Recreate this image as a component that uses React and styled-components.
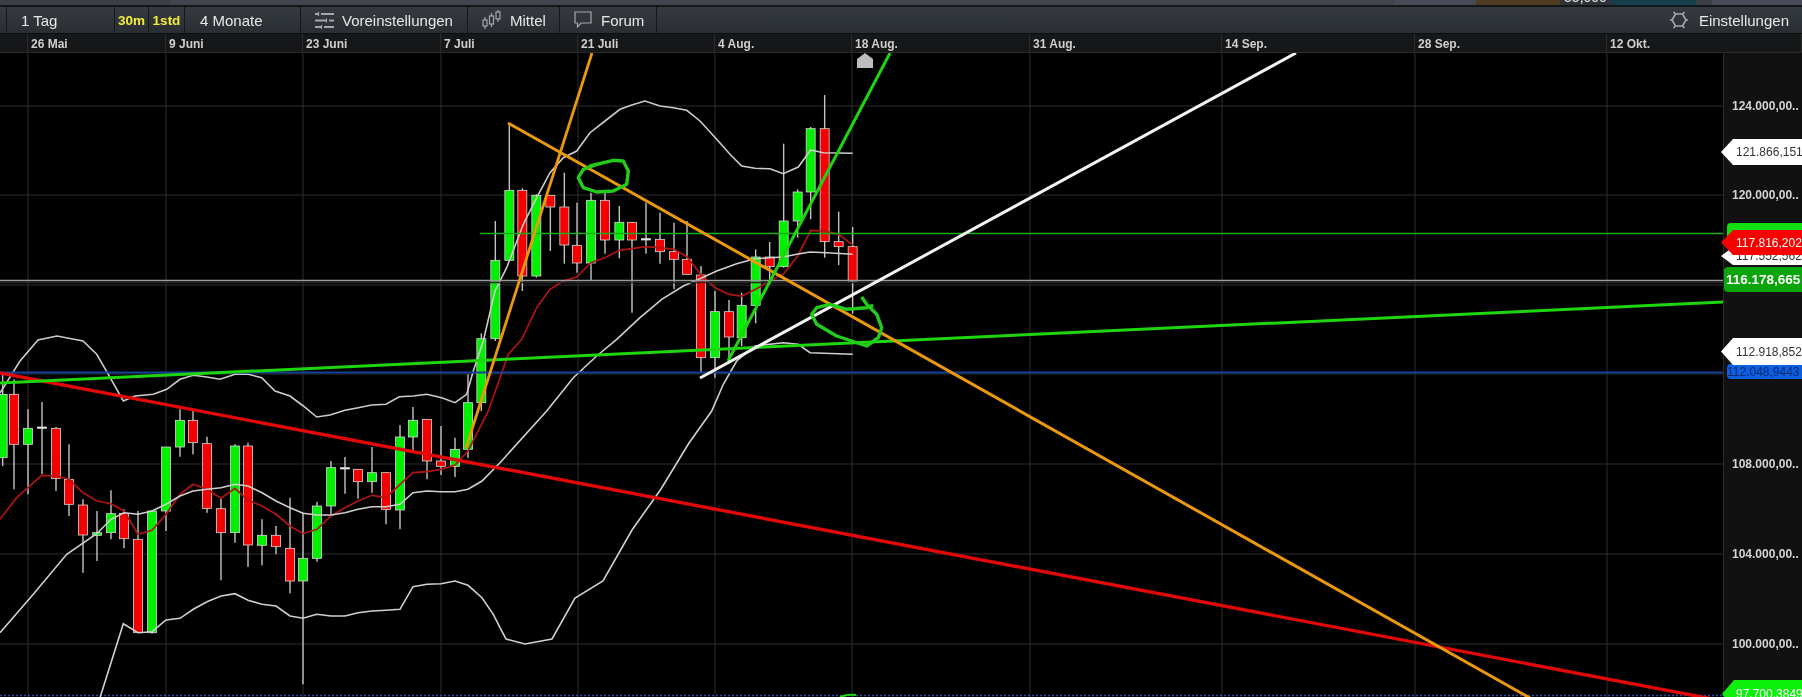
import React from "react";
import styled, { createGlobalStyle } from "styled-components";

// values read from the crops: left crop starts at (0,340), right crop at (440,90), both 3x
const leftCrop = (pts) => pts.map(([x, y]) => [x / 3, 340 + y / 3]);
const rightCrop = (pts) => pts.map(([x, y]) => [440 + x / 3, 90 + y / 3]);
const toPoints = (pts) => pts.map(([x, y]) => `${x.toFixed(1)},${y.toFixed(1)}`).join(" ");

const leftCandles = [
  [8, 160, 350, 100, 375, "g"],
  [42, 160, 310, 115, 445, "r"],
  [84, 262, 310, 205, 460, "g"],
  [126, 258, 262, 183, 400, "w"],
  [168, 262, 412, 258, 450, "r"],
  [207, 415, 490, 310, 525, "r"],
  [249, 492, 582, 475, 695, "r"],
  [291, 575, 583, 510, 660, "g"],
  [333, 518, 575, 448, 595, "g"],
  [372, 517, 593, 505, 622, "r"],
  [414, 595, 875, 510, 875, "r"],
  [456, 510, 875, 507, 878, "g"],
  [498, 318, 510, 318, 570, "g"],
  [540, 238, 318, 205, 347, "g"],
  [579, 238, 305, 210, 340, "r"],
  [621, 308, 502, 287, 515, "r"],
  [663, 503, 575, 472, 718, "r"],
  [705, 315, 575, 310, 605, "g"],
  [744, 315, 612, 305, 677, "r"],
  [786, 583, 613, 535, 673, "g"],
  [828, 583, 617, 555, 640, "r"],
  [870, 622, 720, 470, 757, "r"],
  [909, 652, 720, 515, 1030, "g"],
  [951, 495, 652, 482, 662, "g"],
  [993, 380, 495, 360, 520, "g"],
  [1035, 380, 384, 348, 458, "w"],
  [1074, 385, 422, 385, 473, "r"],
  [1116, 395, 422, 318, 455, "g"],
  [1158, 395, 505, 395, 550, "r"],
  [1200, 288, 507, 253, 565, "g"],
  [1239, 238, 288, 198, 330, "g"],
  [1281, 235, 360, 235, 415, "r"],
  [1323, 360, 376, 255, 402, "r"],
  [1365, 325, 376, 290, 408, "g"],
  [1404, 185, 325, 100, 350, "g"],
];

const rightCandles = [
  [124, 743, 935, 727, 960, "g"],
  [166, 508, 743, 390, 750, "g"],
  [208, 298, 508, 98, 510, "g"],
  [247, 298, 555, 292, 600, "r"],
  [289, 313, 555, 310, 560, "g"],
  [331, 313, 348, 313, 480, "r"],
  [373, 348, 462, 245, 518, "r"],
  [411, 463, 516, 335, 545, "r"],
  [453, 328, 516, 305, 570, "g"],
  [495, 328, 447, 305, 488, "r"],
  [538, 394, 447, 345, 502, "g"],
  [576, 394, 447, 394, 665, "r"],
  [618, 443, 447, 335, 488, "w"],
  [660, 445, 482, 365, 518, "r"],
  [702, 482, 505, 395, 595, "r"],
  [741, 505, 550, 390, 550, "r"],
  [783, 552, 800, 525, 845, "r"],
  [825, 662, 800, 600, 860, "g"],
  [867, 662, 738, 627, 810, "r"],
  [905, 643, 740, 605, 765, "g"],
  [947, 498, 643, 475, 697, "g"],
  [989, 498, 527, 453, 580, "r"],
  [1031, 390, 527, 158, 530, "g"],
  [1073, 303, 390, 295, 440, "g"],
  [1112, 113, 303, 108, 385, "g"],
  [1154, 113, 452, 12, 500, "r"],
  [1196, 452, 467, 362, 522, "r"],
  [1238, 467, 570, 408, 668, "r"],
];

const candles = [
  ...leftCandles.map(([x, t, b, wt, wb, c]) => ({
    x: x / 3, top: 340 + t / 3, bottom: 340 + b / 3, wickTop: 340 + wt / 3, wickBottom: 340 + wb / 3, c,
  })),
  ...rightCandles.map(([x, t, b, wt, wb, c]) => ({
    x: 440 + x / 3, top: 90 + t / 3, bottom: 90 + b / 3, wickTop: 90 + wt / 3, wickBottom: 90 + wb / 3, c,
  })),
];

const bodyColor = { g: "#00f000", r: "#f40000", w: "#e8e8e8" };

const upperBand = [
  [0, 392], [20, 360], [38, 339], [57, 335], [83, 340],
  ...leftCrop([
    [290, 40], [325, 100], [370, 180], [405, 165], [460, 160], [500, 145], [540, 115], [580, 103],
    [620, 108], [660, 115], [705, 100], [745, 100], [785, 110], [825, 150], [870, 165], [910, 195],
    [950, 228], [990, 222], [1035, 208], [1075, 200], [1115, 192], [1158, 190], [1198, 167], [1240, 165],
    [1280, 160], [1325, 170], [1365, 185],
  ]),
  ...rightCrop([
    [80, 910], [100, 840], [130, 750], [165, 600], [200, 530], [250, 400], [290, 320], [330, 245],
    [370, 200], [410, 180], [450, 125], [495, 90], [540, 55], [575, 42], [615, 30], [660, 45],
    [700, 50], [740, 58], [780, 90], [830, 145], [870, 190], [905, 225], [945, 232], [990, 233],
    [1030, 248], [1075, 228], [1112, 177], [1150, 185], [1238, 187],
  ]),
];

const middleBand = [
  ...leftCrop([
    [0, 875], [100, 760], [200, 640], [290, 578], [333, 535], [372, 515], [414, 520], [456, 510],
    [498, 490], [540, 465], [579, 450], [621, 445], [663, 440], [705, 430], [744, 435], [786, 455],
    [828, 480], [870, 500], [909, 517], [951, 522], [993, 522], [1035, 515], [1074, 505], [1116, 497],
    [1158, 497], [1200, 490], [1239, 455], [1281, 450], [1323, 452], [1365, 452], [1404, 445],
    [1446, 420], [1500, 365],
  ]),
  ...rightCrop([
    [320, 960], [400, 860], [470, 795], [530, 745], [600, 680], [665, 625], [730, 585], [783, 562],
    [830, 540], [890, 518], [945, 503], [990, 500], [1030, 498], [1070, 490], [1110, 483], [1160, 485],
    [1238, 490],
  ]),
];

const lowerBand = [
  ...leftCrop([
    [300, 1070], [370, 848], [414, 875], [456, 872], [498, 837], [540, 832], [580, 805], [621, 782],
    [663, 765], [705, 758], [744, 778], [786, 790], [828, 795], [870, 825], [909, 832], [950, 820],
    [993, 825], [1035, 825], [1074, 815], [1116, 810], [1158, 808], [1200, 805], [1239, 737], [1281, 730],
    [1323, 728], [1365, 720], [1404, 733], [1446, 770], [1480, 820], [1500, 860],
  ]),
  [506, 638], [525, 643], [552, 638], [575, 597], [603, 580], [632, 529], [661, 488], [689, 442],
  ...rightCrop([
    [815, 960], [850, 880], [890, 810], [945, 765], [1030, 755], [1075, 760], [1110, 785], [1238, 790],
  ]),
];

const averageLine = [
  ...leftCrop([
    [0, 535], [50, 470], [125, 403], [170, 405], [207, 415], [249, 455], [291, 480], [333, 488],
    [372, 510], [414, 580], [456, 568], [498, 520], [540, 460], [579, 430], [621, 445], [663, 472],
    [705, 442], [744, 478], [786, 495], [828, 520], [870, 555], [909, 578], [951, 565], [993, 525],
    [1035, 500], [1074, 480], [1116, 463], [1158, 470], [1200, 430], [1239, 395], [1281, 392], [1323, 385],
    [1365, 372], [1404, 330],
  ]),
  ...rightCrop([
    [145, 960], [205, 790], [245, 745], [290, 650], [330, 595], [370, 570], [410, 558], [453, 515],
    [495, 500], [538, 478], [618, 467], [660, 470], [702, 475], [741, 497], [783, 552], [825, 590],
    [867, 610], [905, 615], [947, 595], [989, 570], [1031, 548], [1073, 495], [1112, 418], [1154, 420],
    [1196, 430], [1238, 462],
  ]),
];

const trendLines = [
  { x1: 0, y1: 372, x2: 1723, y2: 700, color: "#e00808", width: 3.4 },
  { x1: 0, y1: 382, x2: 1723, y2: 301, color: "#1ed60e", width: 3 },
  { x1: 508, y1: 122, x2: 1530, y2: 697, color: "#ea980c", width: 3 },
  { x1: 466, y1: 447, x2: 592, y2: 52, color: "#ea980c", width: 2.8 },
  { x1: 728, y1: 360, x2: 890, y2: 52, color: "#1ed60e", width: 3 },
  { x1: 700, y1: 377, x2: 1296, y2: 52, color: "#f2f2f2", width: 3 },
];

const loopTop = rightCrop([
  [450, 225], [520, 208], [550, 210], [565, 240], [560, 280], [520, 300], [470, 303], [430, 290], [415, 260], [430, 235], [470, 220],
]);
const loopBottom = rightCrop([
  [1265, 618], [1280, 640], [1310, 670], [1325, 710], [1315, 740], [1280, 765], [1190, 735], [1130, 700], [1115, 670], [1130, 650], [1170, 640], [1220, 655], [1280, 650], [1300, 643],
]);

const dates = [
  { label: "", width: 28 },
  { label: "26 Mai", width: 138 },
  { label: "9 Juni", width: 137 },
  { label: "23 Juni", width: 138 },
  { label: "7 Juli", width: 137 },
  { label: "21 Juli", width: 137 },
  { label: "4 Aug.", width: 137 },
  { label: "18 Aug.", width: 178 },
  { label: "31 Aug.", width: 192 },
  { label: "14 Sep.", width: 193 },
  { label: "28 Sep.", width: 192 },
  { label: "12 Okt.", width: 195 },
];

const gridX = [28, 166, 303, 441, 578, 715, 852, 1030, 1222, 1415, 1607];
const gridY = [105, 194, 284, 373, 463, 553, 643];

const ticks = [
  { label: "124.000,00..", y: 105 },
  { label: "120.000,00..", y: 194 },
  { label: "108.000,00..", y: 463 },
  { label: "104.000,00..", y: 553 },
  { label: "100.000,00..", y: 643 },
];

const stripParts = [
  { width: 170, bg: "#3a3f46" },
  { width: 1225, bg: "#41464e" },
  { width: 81, bg: "#474b55" },
  { width: 84, bg: "#4f3c20" },
  { width: 51, bg: "#2e3338", text: "55,000" },
  { width: 85, bg: "#153f4c" },
  { width: 16, bg: "#3b4047" },
  { width: 90, bg: "#474b55" },
];

const GlobalStyle = createGlobalStyle`
  html, body {
    margin: 0;
    padding: 0;
    background: #000;
    overflow: hidden;
  }
`;

const Page = styled.div`
  width: 1802px;
  height: 697px;
  display: flex;
  flex-direction: column;
  overflow: hidden;
  font-family: "Liberation Sans", Arial, sans-serif;
  background: #000;
  filter: blur(0.4px);
`;

const TopStrip = styled.div`
  height: 5px;
  display: flex;
  flex: none;
  border-bottom: 2px solid #14171a;
`;

const StripPart = styled.div`
  width: ${(p) => p.$width}px;
  background: ${(p) => p.$bg};
  color: #e8e8e8;
  font-size: 14px;
  line-height: 14px;
  text-align: center;
  overflow: hidden;
`;

const StripText = styled.div`
  margin-top: -10px;
`;

const Toolbar = styled.div`
  height: 26px;
  flex: none;
  display: flex;
  background: linear-gradient(#353a40, #2a2e33);
  border-bottom: 1px solid #0d0e10;
  color: #e6e6e6;
  font-size: 15px;
`;

const ToolButton = styled.div`
  width: ${(p) => p.$width}px;
  flex: none;
  box-sizing: border-box;
  display: flex;
  align-items: center;
  gap: ${(p) => p.$gap || 0}px;
  padding-left: ${(p) => p.$pad || 0}px;
  border-right: 1px solid #15171a;
  white-space: nowrap;
`;

const RangeButton = styled(ToolButton)`
  color: #f2ec3a;
  font-size: 13.5px;
  font-weight: bold;
  justify-content: center;
`;

const ToolbarRight = styled.div`
  margin-left: auto;
  display: flex;
  align-items: center;
  gap: 11px;
  padding-right: 13px;
`;

const DateAxis = styled.div`
  height: 19px;
  flex: none;
  display: flex;
  background: #161718;
  border-bottom: 1px solid #2a2a2a;
  box-sizing: border-box;
`;

const DateCell = styled.div`
  width: ${(p) => p.$width}px;
  flex: none;
  box-sizing: border-box;
  padding: 3px 0 0 3px;
  border-right: 1px solid #2c2c2c;
  color: #cfcfcf;
  font-size: 12px;
  font-weight: bold;
  white-space: nowrap;
`;

const Main = styled.div`
  flex: 1;
  display: flex;
  min-height: 0;
`;

const ChartPane = styled.div`
  width: 1723px;
  flex: none;
  background: #000;
`;

const PriceAxis = styled.div`
  position: relative;
  flex: 1;
  background: #111;
  border-left: 1px solid #2b2b2b;
`;

const Tick = styled.div`
  position: absolute;
  left: 8px;
  top: ${(p) => p.$y - 52 - 7}px;
  line-height: 14px;
  color: #d4d4d4;
  font-size: 12px;
  font-weight: bold;
  white-space: nowrap;
`;

const PriceTag = styled.div`
  position: absolute;
  left: ${(p) => p.$left}px;
  top: ${(p) => p.$top - 52}px;
  width: 90px;
  height: ${(p) => p.$height}px;
  box-sizing: border-box;
  display: flex;
  align-items: center;
  padding-left: ${(p) => p.$pad}px;
  background: ${(p) => p.$bg};
  color: ${(p) => p.$color};
  font-size: ${(p) => p.$size || 12}px;
  font-weight: ${(p) => (p.$bold ? "bold" : "normal")};
  white-space: nowrap;
  border-radius: ${(p) => (p.$pointed ? 0 : "4px 0 0 4px")};
  clip-path: ${(p) =>
    p.$pointed ? "polygon(0 50%, 12px 0, 100% 0, 100% 100%, 12px 100%)" : "none"};
`;

function SlidersIcon() {
  return (
    <svg width="19" height="19" viewBox="0 0 19 19" fill="none" stroke="#a4a8ac" strokeWidth="1.8">
      <path d="M0 3h3M6 3h13M0 9.500h11M14 9.500h5M0 16h6M9 16h10" />
      <path d="M3.500 1v4M11.500 7.500v4M6.500 14v4" strokeWidth="1.2" />
    </svg>
  );
}

function CandlesIcon() {
  return (
    <svg width="19" height="20" viewBox="0 0 19 20" fill="none" stroke="#a4a8ac" strokeWidth="1.2">
      <path d="M3 7v12M9.500 3v14M16 0v12" />
      <rect x="1" y="10" width="4" height="6" fill="#2f3338" />
      <rect x="7.500" y="6" width="4" height="8" fill="#2f3338" />
      <rect x="14" y="2" width="4" height="7" fill="#2f3338" />
    </svg>
  );
}

function BubbleIcon() {
  return (
    <svg width="18" height="18" viewBox="0 0 18 18" fill="none" stroke="#a4a8ac" strokeWidth="1.2">
      <path d="M1 1h16v11H7l-3.500 4v-4H1z" />
    </svg>
  );
}

function SettingsIcon() {
  return (
    <svg width="18" height="18" viewBox="0 0 18 18" fill="none" stroke="#a4a8ac" strokeWidth="1.6">
      <path d="M5.500 3h7L16 9l-3.500 6h-7L2 9z" />
      <path d="M0 9h2M16 9h2M3.500 1l2 2M14.500 1l-2 2M3.500 17l2-2M14.500 17l-2-2" />
    </svg>
  );
}

function Chart() {
  return (
    <svg width="1723" height="645" viewBox="0 52 1723 645" style={{ display: "block" }}>
      {gridX.map((x) => (
        <line key={x} x1={x} y1="52" x2={x} y2="697" stroke="#2e2e2e" />
      ))}
      {gridY.map((y) => (
        <line key={y} x1="0" y1={y} x2="1723" y2={y} stroke="#2e2e2e" />
      ))}
      <line x1="0" y1="694.500" x2="1723" y2="694.500" stroke="#2a49a8" strokeWidth="1.500" strokeDasharray="2 2" />

      {candles.map((c) => (
        <g key={c.x}>
          <line x1={c.x} y1={c.wickTop} x2={c.x} y2={c.wickBottom} stroke="#c4c4c4" strokeWidth="1.4" />
          <rect
            x={c.x - 4.500}
            y={c.top}
            width="9"
            height={c.bottom - c.top}
            fill={bodyColor[c.c]}
            stroke="#d8d8d8"
            strokeWidth="0.8"
          />
        </g>
      ))}

      <polyline points={toPoints(averageLine)} fill="none" stroke="#b01414" strokeWidth="1.700" />
      <polyline points={toPoints(upperBand)} fill="none" stroke="#cccccc" strokeWidth="1.600" />
      <polyline points={toPoints(middleBand)} fill="none" stroke="#d0d0d0" strokeWidth="1.600" />
      <polyline points={toPoints(lowerBand)} fill="none" stroke="#d0d0d0" strokeWidth="1.600" />

      <line x1="0" y1="279.500" x2="1723" y2="279.500" stroke="#9c9c9c" strokeWidth="1.300" />
      <line x1="0" y1="281.500" x2="1723" y2="281.500" stroke="#262626" strokeWidth="1.500" />
      <line x1="0" y1="371.500" x2="1723" y2="371.500" stroke="#15409a" strokeWidth="2" />
      <line x1="480" y1="232.500" x2="1723" y2="232.500" stroke="#14b014" strokeWidth="1.700" />

      {trendLines.map((l) => (
        <line key={l.x1 + l.color} x1={l.x1} y1={l.y1} x2={l.x2} y2={l.y2} stroke={l.color} strokeWidth={l.width} />
      ))}

      <polygon points="857,67 857,58 865,52 873,58 873,67" fill="#bdbdbd" />

      <path d="M840 696 Q848 693 856 694" fill="none" stroke="#1ed60e" strokeWidth="2" />
      <polygon
        points={toPoints(loopTop)}
        fill="none"
        stroke="#22cc1a"
        strokeWidth="3.400"
        strokeLinejoin="round"
      />
      <polyline
        points={toPoints(loopBottom)}
        fill="none"
        stroke="#22cc1a"
        strokeWidth="3.400"
        strokeLinejoin="round"
      />
    </svg>
  );
}

export default function App() {
  return (
    <Page>
      <GlobalStyle />
      <TopStrip>
        {stripParts.map((part, i) => (
          <StripPart key={i} $width={part.width} $bg={part.bg}>
            {part.text && <StripText>{part.text}</StripText>}
          </StripPart>
        ))}
      </TopStrip>

      <Toolbar>
        <ToolButton $width={7} />
        <ToolButton $width={108} $pad={14}>1 Tag</ToolButton>
        <RangeButton $width={34}>30m</RangeButton>
        <RangeButton $width={36}>1std</RangeButton>
        <ToolButton $width={116} $pad={15}>4 Monate</ToolButton>
        <ToolButton $width={167} $pad={14} $gap={8}>
          <SlidersIcon />
          Voreinstellungen
        </ToolButton>
        <ToolButton $width={92} $pad={14} $gap={9}>
          <CandlesIcon />
          Mittel
        </ToolButton>
        <ToolButton $width={97} $pad={14} $gap={9}>
          <BubbleIcon />
          Forum
        </ToolButton>
        <ToolbarRight>
          <SettingsIcon />
          Einstellungen
        </ToolbarRight>
      </Toolbar>

      <DateAxis>
        {dates.map((d, i) => (
          <DateCell key={i} $width={d.width}>{d.label}</DateCell>
        ))}
      </DateAxis>

      <Main>
        <ChartPane>
          <Chart />
        </ChartPane>
        <PriceAxis>
          {ticks.map((t) => (
            <Tick key={t.label} $y={t.y}>{t.label}</Tick>
          ))}
          <PriceTag $left={3} $top={222} $height={24} $pad={8} $bg="#10e010" $color="#fff" $bold>
            118.568,588
          </PriceTag>
          <PriceTag $pointed $left={-3} $top={138} $height={26} $pad={15} $bg="#fff" $color="#333">
            121.866,151
          </PriceTag>
          <PriceTag $pointed $left={-3} $top={246} $height={18} $pad={15} $bg="#fff" $color="#333">
            117.552,562
          </PriceTag>
          <PriceTag $pointed $left={-3} $top={229} $height={25} $pad={15} $bg="#f80000" $color="#fff">
            117.816,202
          </PriceTag>
          <PriceTag $left={0} $top={266} $height={25} $pad={2} $bg="#0aa50a" $color="#fff" $size={13.5} $bold>
            116.178,665
          </PriceTag>
          <PriceTag $left={3} $top={363} $height={15} $pad={0} $bg="#0b5fe0" $color="#0a2a70">
            112.048,9443
          </PriceTag>
          <PriceTag $pointed $left={-3} $top={337} $height={27} $pad={15} $bg="#fff" $color="#333">
            112.918,852
          </PriceTag>
          <PriceTag $pointed $left={-2} $top={679} $height={28} $pad={14} $bg="#0cf00c" $color="#fff">
            97.700,3849
          </PriceTag>
        </PriceAxis>
      </Main>
    </Page>
  );
}
